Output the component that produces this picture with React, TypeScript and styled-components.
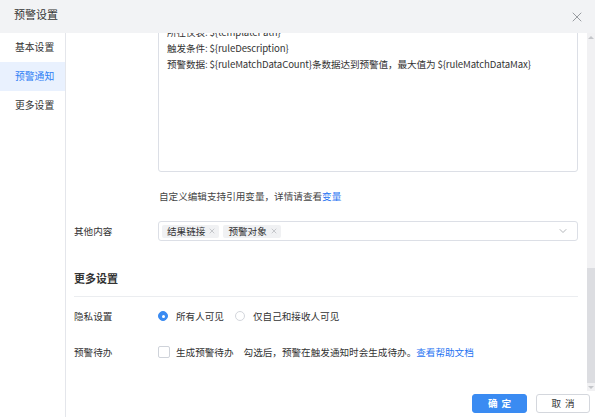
import { useLayoutEffect, useRef } from 'react'
import styled, { createGlobalStyle } from 'styled-components'
import { X, ChevronDown } from 'lucide-react'

const GlobalStyle = createGlobalStyle`
  html, body {
    margin: 0;
    padding: 0;
    background: #fff;
  }
  body {
    font-family: "Noto Sans CJK SC", "Noto Sans", sans-serif;
    font-size: 9.6px;
    color: #333;
  }
`

const Dialog = styled.div`
  width: 595px;
  height: 417px;
  display: flex;
  flex-direction: column;
  background: #fff;
  overflow: hidden;
`

const Header = styled.header`
  height: 33px;
  flex: none;
  display: flex;
  justify-content: space-between;
  padding: 0 10px 0 14px;
  background: #f2f3f5;
`

const Title = styled.div`
  padding-top: 6px;
  font-size: 11px;
  line-height: 16px;
  color: #333;
`

const CloseButton = styled.button`
  align-self: center;
  width: 16px;
  height: 16px;
  padding: 0;
  border: none;
  background: transparent;
  color: #8a8d93;
  display: flex;
  cursor: pointer;
`

const Body = styled.div`
  flex: 1;
  min-height: 0;
  display: flex;
`

const Nav = styled.nav`
  width: 65px;
  flex: none;
  border-right: 1px solid #e4e6eb;
`

const NavItem = styled.div<{ $active?: boolean }>`
  height: 29px;
  line-height: 29px;
  padding-left: 15px;
  font-size: 9.8px;
  color: ${(p) => (p.$active ? '#2f7ff5' : '#333')};
  background: ${(p) => (p.$active ? '#e9f1fe' : 'transparent')};
`

const Main = styled.div`
  flex: 1;
  min-width: 0;
  display: flex;
  flex-direction: column;
`

const ScrollWrap = styled.div`
  flex: 1;
  min-height: 0;
  display: flex;
`

const Scroll = styled.div`
  flex: 1;
  min-width: 0;
  overflow-y: scroll;
  padding: 18px 9px 29px 8px;
  scrollbar-width: none;
`

/* 自绘滚动条（无头浏览器会隐藏原生滚动条） */
const Rail = styled.div`
  width: 8px;
  flex: none;
  display: flex;
  flex-direction: column;
  background: #f1f1f3;
`

const RailArrow = styled.div<{ $down?: boolean }>`
  height: 8px;
  flex: none;
  display: flex;
  align-items: center;
  justify-content: center;

  &::before {
    content: '';
    width: 0;
    height: 0;
    border-left: 3px solid transparent;
    border-right: 3px solid transparent;
    ${(p) => (p.$down ? 'border-top' : 'border-bottom')}: 3px solid #c4c6ca;
  }
`

const Track = styled.div`
  flex: 1;
  display: flex;
  flex-direction: column;
  justify-content: flex-end;
`

const Thumb = styled.div`
  height: 115px;
  background: #dcdde1;
`

const SectionTitle = styled.div<{ $mt?: number }>`
  margin-top: ${(p) => p.$mt ?? 27}px;
  font-size: 11px;
  font-weight: 600;
  line-height: 20px;
  padding-bottom: 8px;
  border-bottom: 1px solid #ebedf0;
  color: #333;
`

const Row = styled.div<{ $mt?: number; $top?: boolean }>`
  margin-top: ${(p) => p.$mt ?? 16}px;
  display: flex;
  align-items: ${(p) => (p.$top ? 'flex-start' : 'center')};
  min-height: 20px;
`

const Label = styled.div`
  width: 84px;
  flex: none;
  line-height: 20px;
  color: #333;
`

const Control = styled.div`
  flex: 1;
  min-width: 0;
  display: flex;
  align-items: center;
  color: #333;
`

const InputBox = styled.div`
  flex: 1;
  height: 20px;
  box-sizing: border-box;
  border: 1px solid #dcdfe6;
  border-radius: 3px;
  display: flex;
  align-items: center;
  padding: 0 8px;
`

const SelectBox = styled(InputBox)`
  gap: 4px;
  padding: 0 8px 0 3px;

  > svg {
    margin-left: auto;
    color: #9a9da3;
    flex: none;
  }
`

const SelectValue = styled.span`
  padding-left: 5px;
`

const Placeholder = styled.span`
  color: #b0b3b8;
`

const TagChip = styled.span`
  height: 13px;
  display: inline-flex;
  align-items: center;
  gap: 3px;
  padding: 0 3px 0 5px;
  border-radius: 2px;
  background: #f0f1f3;
  line-height: 13px;
  color: #333;

  svg {
    color: #9a9da3;
  }
`

const TextArea = styled.div<{ $h: number }>`
  flex: 1;
  height: ${(p) => p.$h}px;
  box-sizing: border-box;
  border: 1px solid #dcdfe6;
  border-radius: 3px;
  padding: 6px 8px;
  color: #333;
`

const TextLine = styled.div`
  line-height: 16px;
  letter-spacing: -0.1px;
  white-space: nowrap;
`

const Hint = styled.div`
  margin: 16px 0 0 85px;
  line-height: 16px;
  color: #444;
`

const Link = styled.a`
  color: #1f74f2;
  text-decoration: none;
`

const RadioItem = styled.label`
  display: inline-flex;
  align-items: center;
  gap: 8px;
  margin-right: 11px;
  line-height: 20px;
  color: #333;
`

const RadioDot = styled.span<{ $checked?: boolean }>`
  width: 10px;
  height: 10px;
  box-sizing: border-box;
  border-radius: 50%;
  border: 1px solid ${(p) => (p.$checked ? '#3a8bf2' : '#d3d6dc')};
  background: ${(p) => (p.$checked ? '#3a8bf2' : '#fff')};
  display: flex;
  align-items: center;
  justify-content: center;

  &::after {
    content: '';
    width: 3px;
    height: 3px;
    border-radius: 50%;
    background: #fff;
    display: ${(p) => (p.$checked ? 'block' : 'none')};
  }
`

const CheckItem = styled.label`
  display: inline-flex;
  align-items: center;
  gap: 6px;
  margin-right: 10px;
  line-height: 20px;
  color: #333;
`

const CheckBox = styled.span<{ $checked?: boolean }>`
  width: 12px;
  height: 12px;
  box-sizing: border-box;
  border: 1px solid ${(p) => (p.$checked ? '#3a8bf2' : '#cfd3da')};
  background: ${(p) => (p.$checked ? '#3a8bf2' : '#fff')};
  border-radius: 2px;
`

const Desc = styled.span`
  line-height: 20px;
  color: #333;
`

const Footer = styled.footer`
  height: 26px;
  flex: none;
  display: flex;
  justify-content: flex-end;
  align-items: flex-start;
  gap: 9px;
  padding: 3px 5px 0 0;
  box-sizing: border-box;
`

const Button = styled.button<{ $primary?: boolean }>`
  height: 19px;
  width: ${(p) => (p.$primary ? 55 : 54)}px;
  padding: 0 0 0 4px;
  border-radius: 3px;
  border: 1px solid ${(p) => (p.$primary ? '#3a8bf2' : '#d4d7dd')};
  background: ${(p) => (p.$primary ? '#3a8bf2' : '#fff')};
  color: ${(p) => (p.$primary ? '#fff' : '#333')};
  font-family: inherit;
  font-size: 9.6px;
  font-weight: ${(p) => (p.$primary ? 600 : 400)};
  letter-spacing: 4px;
  line-height: 17px;
  cursor: pointer;
`

type Field = {
  label: string
  kind: 'input' | 'select' | 'radio' | 'check' | 'area'
  value?: string
  options?: string[]
}

// 已滚出可视区的前两个分组
const basicFields: Field[] = [
  { label: '预警名称', kind: 'input', value: '销售额异常预警' },
  { label: '预警描述', kind: 'area', value: '请输入预警描述' },
  { label: '监控指标', kind: 'select', value: '销售额' },
  { label: '预警条件', kind: 'select', value: '大于 10000' },
  { label: '检测频率', kind: 'radio', options: ['每天', '每小时'] },
  { label: '生效时间', kind: 'select', value: '00:00 - 23:59' },
  { label: '预警级别', kind: 'radio', options: ['一般', '重要', '紧急'] },
  { label: '静默周期', kind: 'select', value: '1小时' }
]

const noticeFields: Field[] = [
  { label: '通知方式', kind: 'check', options: ['站内信', '邮件', '短信'] },
  { label: '接收人', kind: 'select', value: '请选择接收人' },
  { label: '重复通知', kind: 'check', options: ['开启'] },
  { label: '通知时段', kind: 'select', value: '全天' },
  { label: '通知频率', kind: 'select', value: '每次触发' },
  { label: '通知标题', kind: 'input', value: '${alarmName}' },
  { label: '通知内容', kind: 'radio', options: ['默认模板', '自定义'] }
]

const templateLines = [
  '【预警通知】${alarmName}',
  '所在仪表: ${templatePath}',
  '触发条件: ${ruleDescription}',
  '预警数据: ${ruleMatchDataCount}条数据达到预警值，最大值为 ${ruleMatchDataMax}'
]

function FieldRow({ field, mt }: { field: Field; mt?: number }) {
  const { label, kind, value, options = [] } = field
  return (
    <Row $mt={mt} $top={kind === 'area'}>
      <Label>{label}</Label>
      <Control>
        {kind === 'input' && <InputBox>{value}</InputBox>}
        {kind === 'area' && (
          <TextArea $h={50}>
            <Placeholder>{value}</Placeholder>
          </TextArea>
        )}
        {kind === 'select' && (
          <SelectBox>
            <SelectValue>{value}</SelectValue>
            <ChevronDown size={12} strokeWidth={1.5} />
          </SelectBox>
        )}
        {kind === 'radio' &&
          options.map((o, i) => (
            <RadioItem key={o}>
              <RadioDot $checked={i === options.length - 1} />
              {o}
            </RadioItem>
          ))}
        {kind === 'check' &&
          options.map((o, i) => (
            <CheckItem key={o}>
              <CheckBox $checked={i === 0} />
              {o}
            </CheckItem>
          ))}
      </Control>
    </Row>
  )
}

export default function App() {
  const scrollRef = useRef<HTMLDivElement>(null)

  useLayoutEffect(() => {
    const el = scrollRef.current
    if (el) el.scrollTop = el.scrollHeight
  }, [])

  return (
    <>
      <GlobalStyle />
      <Dialog>
        <Header>
          <Title>预警设置</Title>
          <CloseButton aria-label="关闭">
            <X size={16} strokeWidth={1.3} />
          </CloseButton>
        </Header>

        <Body>
          <Nav>
            <NavItem>基本设置</NavItem>
            <NavItem $active>预警通知</NavItem>
            <NavItem>更多设置</NavItem>
          </Nav>

          <Main>
            <ScrollWrap>
              <Scroll ref={scrollRef}>
                <SectionTitle $mt={0}>基本设置</SectionTitle>
                {basicFields.map((f, i) => (
                  <FieldRow key={f.label} field={f} mt={i === 0 ? 9 : 16} />
                ))}

                <SectionTitle>预警通知</SectionTitle>
                {noticeFields.map((f, i) => (
                  <FieldRow key={f.label} field={f} mt={i === 0 ? 9 : 16} />
                ))}

                <Row $top>
                  <Label />
                  <Control>
                    <TextArea $h={171}>
                      {templateLines.map((line) => (
                        <TextLine key={line}>{line}</TextLine>
                      ))}
                    </TextArea>
                  </Control>
                </Row>
                <Hint>
                  自定义编辑支持引用变量，详情请查看<Link href="#">变量</Link>
                </Hint>

                <Row $mt={17}>
                  <Label>其他内容</Label>
                  <Control>
                    <SelectBox>
                      <TagChip>
                        结果链接 <X size={8} strokeWidth={1.5} />
                      </TagChip>
                      <TagChip>
                        预警对象 <X size={8} strokeWidth={1.5} />
                      </TagChip>
                      <ChevronDown size={12} strokeWidth={1.5} />
                    </SelectBox>
                  </Control>
                </Row>

                <SectionTitle>更多设置</SectionTitle>
                <Row $mt={9}>
                  <Label>隐私设置</Label>
                  <Control>
                    <RadioItem>
                      <RadioDot $checked />
                      所有人可见
                    </RadioItem>
                    <RadioItem>
                      <RadioDot />
                      仅自己和接收人可见
                    </RadioItem>
                  </Control>
                </Row>
                <Row>
                  <Label>预警待办</Label>
                  <Control>
                    <CheckItem>
                      <CheckBox />
                      生成预警待办
                    </CheckItem>
                    <Desc>
                      勾选后，预警在触发通知时会生成待办。<Link href="#">查看帮助文档</Link>
                    </Desc>
                  </Control>
                </Row>
              </Scroll>

              <Rail>
                <RailArrow />
                <Track>
                  <Thumb />
                </Track>
                <RailArrow $down />
              </Rail>
            </ScrollWrap>

            <Footer>
              <Button $primary>确定</Button>
              <Button>取消</Button>
            </Footer>
          </Main>
        </Body>
      </Dialog>
    </>
  )
}
